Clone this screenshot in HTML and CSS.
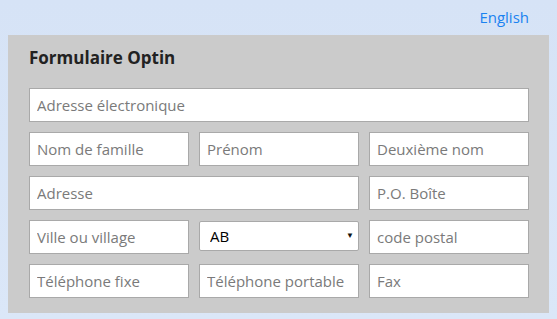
FILE: index.html
```html
<!DOCTYPE html>
<html lang="fr">
<head>
    <meta charset="UTF-8">
    <meta name="viewport" content="width=device-width, initial-scale=1.0">
    <title>Formulaire Optin</title>
    <link rel="stylesheet" href="styles.css">
</head>
<body>
    <div class="lang">
        <a href="#">English</a>
    </div>
    <div class="form-panel">
        <h2>Formulaire Optin</h2>
        <form class="optin-grid">
            <input type="text" class="span-3" placeholder="Adresse électronique">

            <input type="text" placeholder="Nom de famille">
            <input type="text" placeholder="Prénom">
            <input type="text" placeholder="Deuxième nom">

            <input type="text" class="span-2" placeholder="Adresse">
            <input type="text" placeholder="P.O. Boîte">

            <input type="text" placeholder="Ville ou village">
            <div class="select-wrap">
                <select name="province">
                    <option>AB</option>
                    <option>BC</option>
                    <option>MB</option>
                    <option>NB</option>
                    <option>NL</option>
                    <option>NS</option>
                    <option>ON</option>
                    <option>PE</option>
                    <option>QC</option>
                    <option>SK</option>
                </select>
            </div>
            <input type="text" placeholder="code postal">

            <input type="text" placeholder="Téléphone fixe">
            <input type="text" placeholder="Téléphone portable">
            <input type="text" placeholder="Fax">
        </form>
    </div>
</body>
</html>
```

FILE: styles.css
```css
body {
    font-family: "Open Sans", Arial, sans-serif;
    background: linear-gradient(to bottom, #d6e3f6, #dbe7f8);
    margin: 0;
    padding: 0 8px;
    min-height: 319px;
    box-sizing: border-box;
}
.lang {
    text-align: right;
    padding: 7px 20px 0 0;
    height: 35px;
    box-sizing: border-box;
    line-height: 20px;
}
.lang a {
    color: #1a82f0;
    text-decoration: none;
    font-size: 15px;
}
.form-panel {
    background-color: #cbcbcb;
    padding: 11px 20px 15px 21px;
}
h2 {
    font-size: 17px;
    font-weight: bold;
    color: #222;
    margin: 0 0 18px 0;
    line-height: 24px;
}
.optin-grid {
    display: grid;
    grid-template-columns: repeat(3, 160px);
    grid-auto-rows: 34px;
    gap: 10px;
}
.span-3 {
    grid-column: span 3;
}
.span-2 {
    grid-column: span 2;
}
input[type="text"] {
    font-family: inherit;
    font-size: 15px;
    color: #333;
    height: 34px;
    box-sizing: border-box;
    border: 1px solid #a9a9a9;
    background: #fff;
    padding: 0 7px;
    margin: 0;
    outline: none;
}
input::placeholder {
    color: #7a7a7a;
}
.select-wrap {
    position: relative;
    padding-top: 1px;
}
.select-wrap select {
    appearance: none;
    -webkit-appearance: none;
    width: 160px;
    height: 30px;
    box-sizing: border-box;
    border: 1px solid #a9a9a9;
    border-radius: 2px;
    background: #fff;
    font-family: inherit;
    font-size: 15px;
    color: #000;
    padding: 0 10px;
    margin: 0;
}
.select-wrap::after {
    content: "\25BC";
    position: absolute;
    right: 5px;
    top: 9px;
    font-size: 8px;
    color: #111;
    pointer-events: none;
}
```
